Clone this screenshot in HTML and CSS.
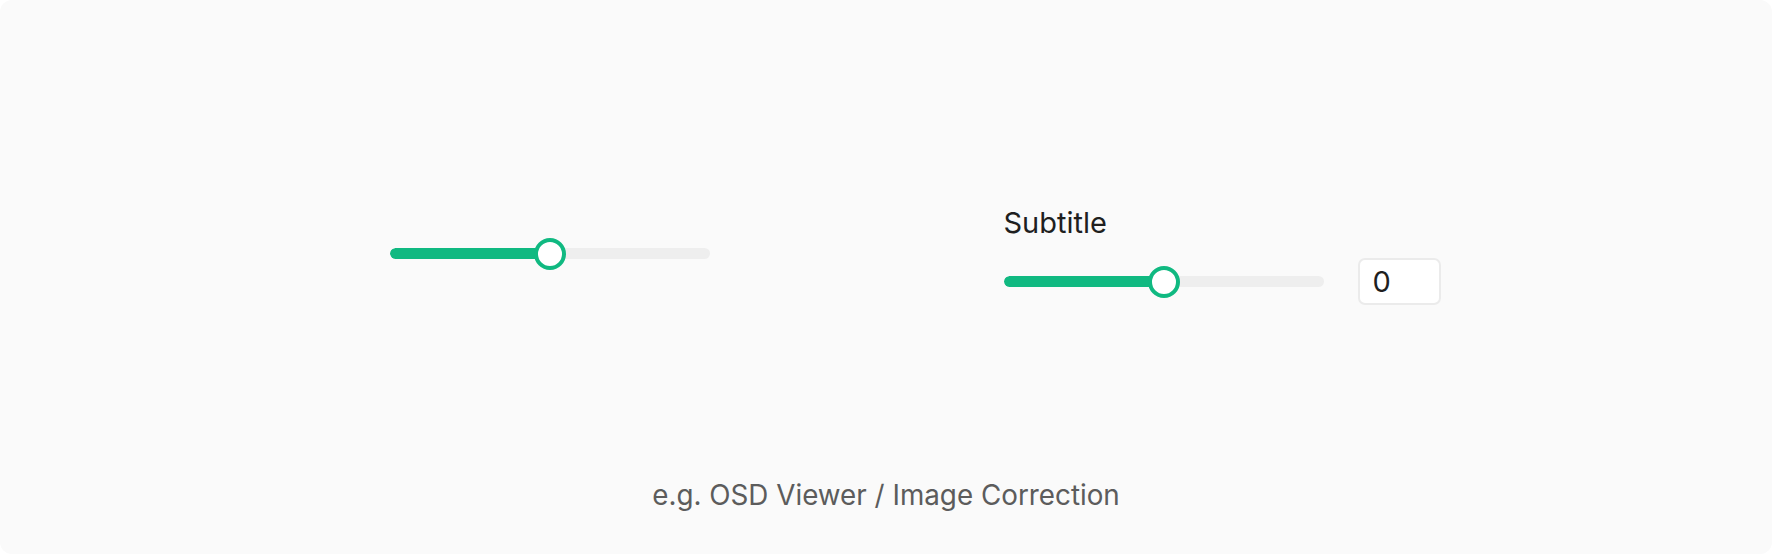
FILE: index.html
```html
<!DOCTYPE html>
<html lang="en">
<head>
<meta charset="utf-8">
<title>Slider</title>
<link rel="stylesheet" href="styles.css">
</head>
<body>
<div class="frame">
  <div class="stage">
    <div class="cell">
      <div class="slider slider-plain">
        <div class="track"><div class="fill" style="width:50%"></div></div>
        <div class="thumb" style="left:50%"></div>
      </div>
    </div>
    <div class="cell">
      <div class="group">
        <div class="label">Subtitle</div>
        <div class="row">
          <div class="slider">
            <div class="track"><div class="fill" style="width:50%"></div></div>
            <div class="thumb" style="left:50%"></div>
          </div>
          <div class="num">0</div>
        </div>
      </div>
    </div>
  </div>
  <div class="caption">e.g. OSD Viewer / Image Correction</div>
</div>
</body>
</html>
```

FILE: styles.css
```css
html, body {
  margin: 0;
  padding: 0;
  background: #ffffff;
}
body {
  font-family: Inter, "Noto Sans", sans-serif;
}
.frame {
  box-sizing: border-box;
  height: 554px;
  width: 1772px;
  background: #fafafa;
  border-radius: 12px;
  display: flex;
  flex-direction: column;
  padding-top: 32px;
}
.stage {
  flex: 1;
  width: 1344px;
  margin: 0 auto;
  display: grid;
  grid-template-columns: 1fr 1fr;
  align-items: center;
  justify-items: center;
}
.cell {
  display: flex;
  justify-content: center;
}
.slider {
  position: relative;
  width: 320px;
  height: 32px;
  display: flex;
  align-items: center;
}
.slider-plain {
  margin-bottom: 3px;
}
.track {
  width: 100%;
  height: 11px;
  border-radius: 6px;
  background: #eeeeee;
  overflow: hidden;
}
.fill {
  height: 100%;
  background: #10b981;
  border-radius: 6px;
}
.thumb {
  position: absolute;
  top: 0;
  width: 32px;
  height: 32px;
  box-sizing: border-box;
  border: 4px solid #10b981;
  border-radius: 50%;
  background: #ffffff;
  transform: translateX(-50%);
}
.group {
  display: flex;
  flex-direction: column;
  gap: 18px;
}
.label {
  font-size: 29px;
  color: #1f1f1f;
}
.row {
  display: flex;
  align-items: center;
  gap: 34px;
}
.num {
  box-sizing: border-box;
  width: 83px;
  height: 47px;
  border: 2px solid #ebebeb;
  border-radius: 7px;
  background: #ffffff;
  display: flex;
  align-items: center;
  padding-left: 13px;
  font-size: 29px;
  color: #1f1f1f;
}
.caption {
  text-align: center;
  font-size: 27.8px;
  color: #5c5c5c;
  padding-bottom: 42px;
}
```
